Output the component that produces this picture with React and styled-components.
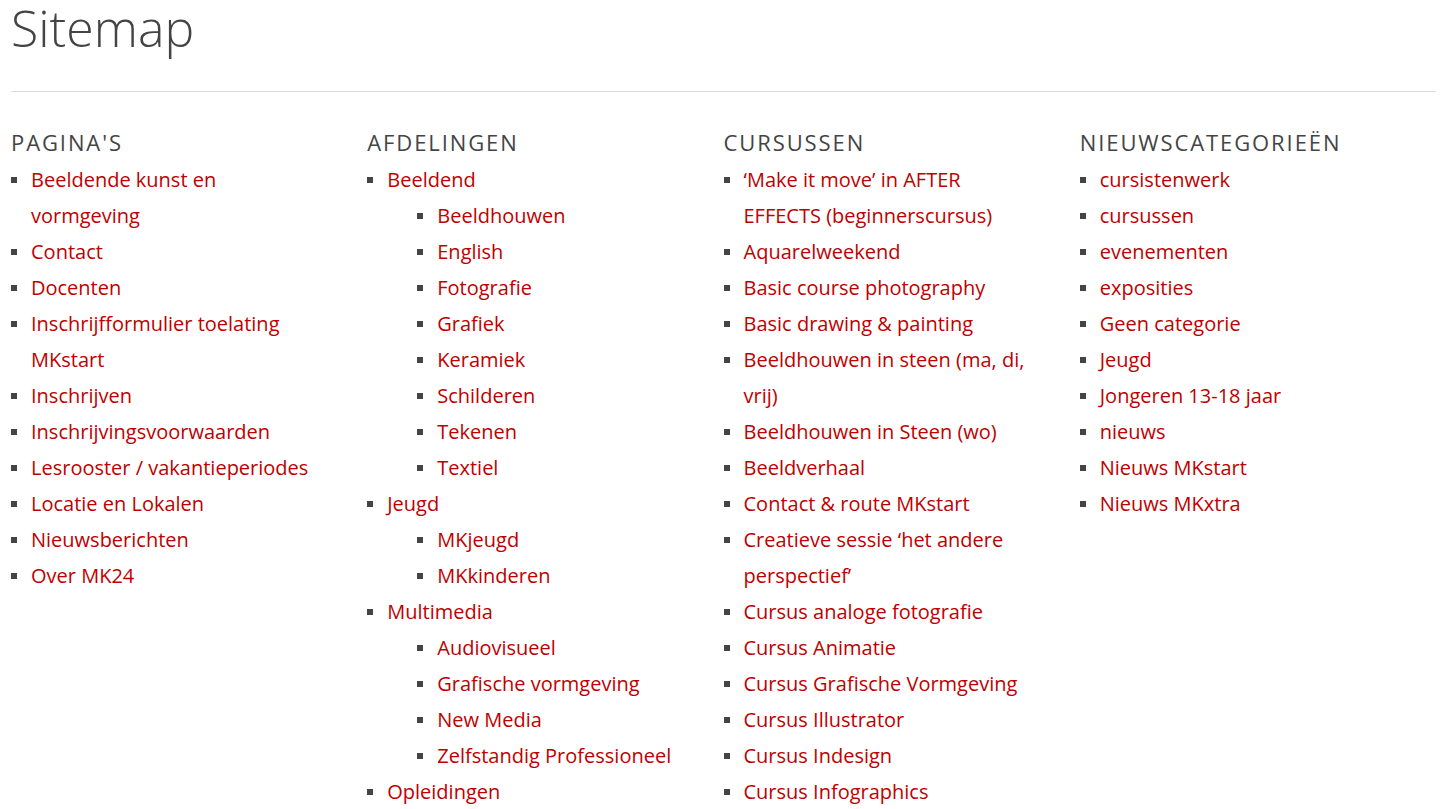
import React from 'react';
import styled, { createGlobalStyle } from 'styled-components';

const GlobalStyle = createGlobalStyle`
    html, body {
        margin: 0;
        padding: 0;
        background: #fff;
        overflow: hidden;
    }
    body {
        font-family: "Open Sans", "Liberation Sans", sans-serif;
    }
`

const Page = styled.div`
    padding: 0 14px 0 11px;
`

const Title = styled.h1`
    margin: 0;
    font-size: 50px;
    font-weight: 300;
    line-height: 56px;
    color: #444;
`

const Rule = styled.hr`
    margin: 35px 0 0 0;
    border: 0;
    border-top: 1px solid #dcdcdc;
`

const Columns = styled.div`
    display: grid;
    grid-template-columns: repeat(4, 1fr);
    padding-top: 32px;
`

const Column = styled.div`
    padding-right: 46px;
`

const Heading = styled.h2`
    margin: 0 0 2px 0;
    font-size: 22px;
    font-weight: 400;
    line-height: 36px;
    letter-spacing: 1.9px;
    text-transform: uppercase;
    color: #444;
`

const List = styled.ul`
    list-style: none;
    margin: 0;
    padding: 0 0 0 ${props => (props.nested ? '30px' : '0')};
`

const Item = styled.li`
    position: relative;
    padding-left: 20px;
    font-size: 20px;
    line-height: 36px;

    &::before {
        content: "";
        position: absolute;
        left: 0;
        top: 15px;
        width: 6px;
        height: 6px;
        background: #444;
    }
`

const Link = styled.a`
    color: #c00000;
    text-decoration: none;
`

const sections = [
    {
        title: "Pagina's",
        items: [
            'Beeldende kunst en vormgeving',
            'Contact',
            'Docenten',
            'Inschrijfformulier toelating MKstart',
            'Inschrijven',
            'Inschrijvingsvoorwaarden',
            'Lesrooster / vakantieperiodes',
            'Locatie en Lokalen',
            'Nieuwsberichten',
            'Over MK24',
        ],
    },
    {
        title: 'Afdelingen',
        items: [
            { name: 'Beeldend', children: ['Beeldhouwen', 'English', 'Fotografie', 'Grafiek', 'Keramiek', 'Schilderen', 'Tekenen', 'Textiel'] },
            { name: 'Jeugd', children: ['MKjeugd', 'MKkinderen'] },
            { name: 'Multimedia', children: ['Audiovisueel', 'Grafische vormgeving', 'New Media', 'Zelfstandig Professioneel'] },
            'Opleidingen',
        ],
    },
    {
        title: 'Cursussen',
        items: [
            '\u2018Make it move\u2019 in AFTER EFFECTS (beginnerscursus)',
            'Aquarelweekend',
            'Basic course photography',
            'Basic drawing & painting',
            'Beeldhouwen in steen (ma, di, vrij)',
            'Beeldhouwen in Steen (wo)',
            'Beeldverhaal',
            'Contact & route MKstart',
            'Creatieve sessie \u2018het andere perspectief\u2019',
            'Cursus analoge fotografie',
            'Cursus Animatie',
            'Cursus Grafische Vormgeving',
            'Cursus Illustrator',
            'Cursus Indesign',
            'Cursus Infographics',
        ],
    },
    {
        title: 'Nieuwscategorieën',
        items: [
            'cursistenwerk',
            'cursussen',
            'evenementen',
            'exposities',
            'Geen categorie',
            'Jeugd',
            'Jongeren 13-18 jaar',
            'nieuws',
            'Nieuws MKstart',
            'Nieuws MKxtra',
        ],
    },
]

const Entries = ({ items, nested }) => (
    <List nested={nested}>
        {items.map(item => {
            const name = typeof item === 'string' ? item : item.name
            return (
                <Item key={name}>
                    <Link href="#">{name}</Link>
                    {item.children && <Entries items={item.children} nested />}
                </Item>
            )
        })}
    </List>
)

const App = () => {
    return (
        <Page>
            <GlobalStyle />
            <Title>Sitemap</Title>
            <Rule />
            <Columns>
                {sections.map(section => (
                    <Column key={section.title}>
                        <Heading>{section.title}</Heading>
                        <Entries items={section.items} />
                    </Column>
                ))}
            </Columns>
        </Page>
    )
}

export default App;
